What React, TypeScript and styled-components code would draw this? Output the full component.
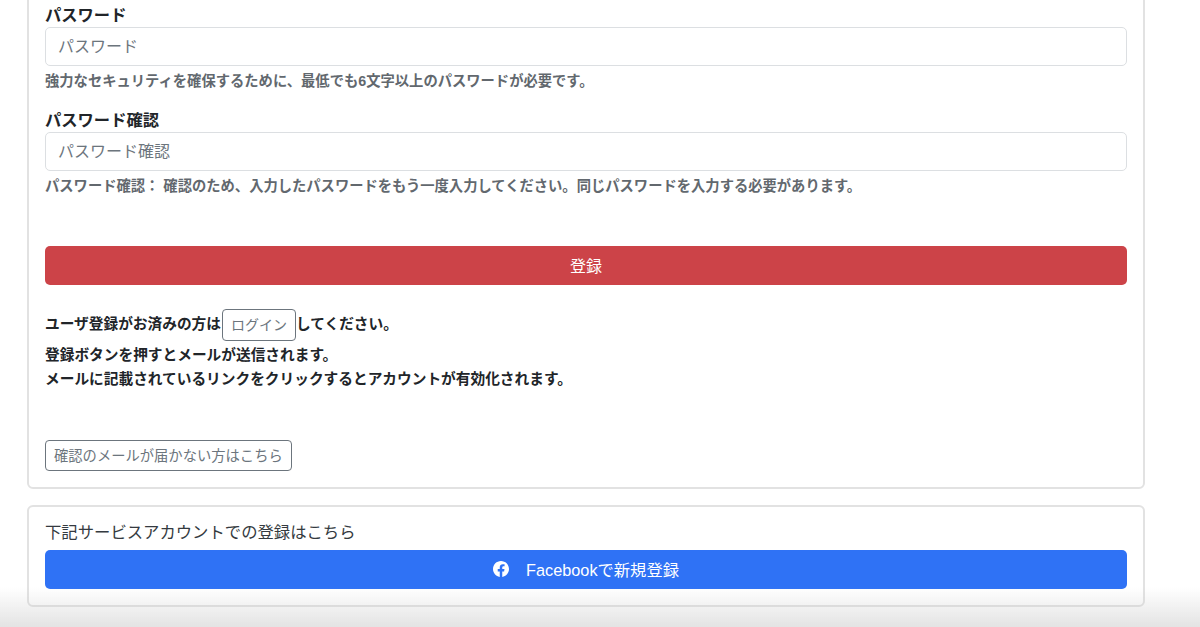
import React from 'react';
import styled, { createGlobalStyle } from 'styled-components';

const GlobalStyle = createGlobalStyle`
  html, body {
    margin: 0;
    height: 627px;
    overflow: hidden;
    background: #fff;
  }
  * {
    box-sizing: border-box;
  }
  body {
    font-family: "Liberation Sans", "Noto Sans CJK JP", sans-serif;
    font-size: 16px;
    color: #212529;
  }
`;

const Page = styled.main`
  display: flex;
  flex-direction: column;
  gap: 16px;
  width: 1118px;
  margin: -20px 0 0 27px;
`;

const Card = styled.section<{ $pad: string }>`
  border: 2px solid #e2e2e2;
  border-radius: 6px;
  background: #fff;
  padding: ${(p) => p.$pad};
`;

const Field = styled.div`
  margin-bottom: 17px;
`;

const Label = styled.label`
  display: block;
  font-size: 16.3px;
  line-height: 24px;
  font-weight: 700;
  color: #212529;
`;

const Input = styled.input`
  display: block;
  width: 100%;
  height: 39px;
  padding: 0 12px;
  border: 1px solid #dcdfe2;
  border-radius: 5px;
  background: #fff;
  font: inherit;
  outline: none;

  &::placeholder {
    color: #6c757d;
    opacity: 1;
  }
`;

const Help = styled.p`
  margin: 5px 0 0;
  font-size: 14.3px;
  line-height: 20px;
  font-weight: 700;
  color: #62686e;
`;

const SolidButton = styled.button<{ $bg: string }>`
  display: flex;
  align-items: center;
  justify-content: center;
  gap: 17px;
  width: 100%;
  height: 39px;
  padding: 0 0 2px;
  border: none;
  border-radius: 5px;
  background: ${(p) => p.$bg};
  color: #fff;
  font: inherit;
`;

const SubmitButton = styled(SolidButton)`
  margin-top: 50px;
`;

const FacebookButton = styled(SolidButton)`
  font-size: 16.3px;
`;

const Notes = styled.div`
  margin-top: 24px;
  font-size: 14.7px;
  font-weight: 700;
  color: #212529;
`;

const NoteRow = styled.p`
  display: flex;
  align-items: center;
  margin: 0;
  min-height: 24px;
  padding-bottom: 2px;
`;

const LoginRow = styled(NoteRow)`
  align-items: flex-start;
  height: 32px;
  margin-bottom: 1px;
  padding-bottom: 0;
  line-height: 30px;
`;

const OutlineButton = styled.button`
  flex: none;
  height: 32px;
  margin-left: 1px;
  padding: 0 8px 2px;
  border: 1px solid #6c757d;
  border-radius: 4px;
  background: #fff;
  color: #6c757d;
  font: 400 14px "Liberation Sans", "Noto Sans CJK JP", sans-serif;
`;

const ResendButton = styled(OutlineButton)`
  display: block;
  height: 31px;
  margin: 50px 0 0;
  font-size: 14.3px;
`;

const Lead = styled.p`
  margin: 0 0 6px;
  font-size: 16.35px;
  line-height: 24px;
  color: #343a40;
`;

const WindowShade = styled.div`
  position: fixed;
  left: 0;
  right: 0;
  bottom: 0;
  height: 40px;
  background: linear-gradient(to bottom, rgba(200, 200, 200, 0), rgba(200, 200, 200, 0.5));
  pointer-events: none;
`;

const FacebookIcon = () => (
  <svg width="16" height="16" viewBox="0 0 16 16" fill="#fff" aria-hidden="true">
    <path d="M16 8.05C16 3.6 12.42 0 8 0S0 3.6 0 8.05c0 4.02 2.93 7.35 6.75 7.95v-5.62H4.72V8.05h2.03V6.27c0-2.01 1.2-3.13 3.02-3.13.88 0 1.8.16 1.8.16v1.98h-1.01c-1 0-1.31.62-1.31 1.26v1.51h2.22l-.35 2.33H9.25V16C13.07 15.4 16 12.07 16 8.05z" />
  </svg>
);

export default function App() {
  return (
    <>
      <GlobalStyle />
      <Page>
        <Card $pad="21px 16px 16px">
          <Field>
            <Label>パスワード</Label>
            <Input placeholder="パスワード" />
            <Help>強力なセキュリティを確保するために、最低でも6文字以上のパスワードが必要です。</Help>
          </Field>
          <Field>
            <Label>パスワード確認</Label>
            <Input placeholder="パスワード確認" />
            <Help>パスワード確認： 確認のため、入力したパスワードをもう一度入力してください。同じパスワードを入力する必要があります。</Help>
          </Field>
          <SubmitButton $bg="#cc4348">登録</SubmitButton>
          <Notes>
            <LoginRow>
              ユーザ登録がお済みの方は<OutlineButton>ログイン</OutlineButton>してください。
            </LoginRow>
            <NoteRow>登録ボタンを押すとメールが送信されます。</NoteRow>
            <NoteRow>メールに記載されているリンクをクリックするとアカウントが有効化されます。</NoteRow>
          </Notes>
          <ResendButton>確認のメールが届かない方はこちら</ResendButton>
        </Card>
        <Card $pad="13px 16px 16px">
          <Lead>下記サービスアカウントでの登録はこちら</Lead>
          <FacebookButton $bg="#2f72f5">
            <FacebookIcon />
            Facebookで新規登録
          </FacebookButton>
        </Card>
      </Page>
      <WindowShade />
    </>
  );
}
